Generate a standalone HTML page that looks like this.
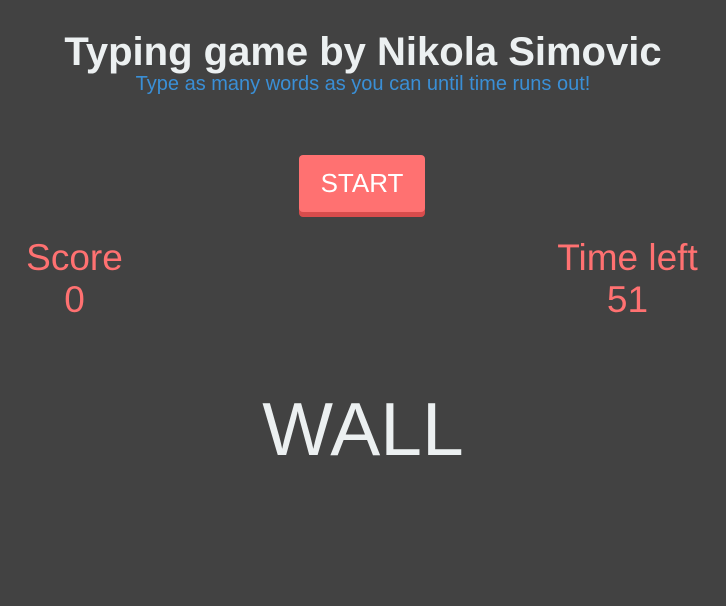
<!DOCTYPE html>
<html><head><style>
html,body{margin:0;padding:0;width:726px;height:606px;background:#424242;overflow:hidden;font-family:"Liberation Sans",Arial,sans-serif}
.a{position:absolute;line-height:1;white-space:nowrap}
.c{left:0;width:726px;text-align:center}
.btn{position:absolute;left:299px;top:155px;width:126px;height:57px;background:#ff7171;border-radius:4px;box-shadow:0 5px 0 #d84c4c}
.red{color:#ff7171;font-size:37px;text-align:center}
</style></head><body>
<div class="a c" style="top:32px;font-size:40px;font-weight:bold;color:#ecf0f1">Typing game by Nikola Simovic</div>
<div class="a c" style="top:74px;font-size:20px;color:#3a8fd6">Type as many words as you can until time runs out!</div>
<div class="btn"></div>
<div class="a" style="left:299px;width:126px;text-align:center;top:170px;font-size:26px;color:#fff">START</div>
<div class="a red" style="left:0;width:149px;top:239px">Score</div>
<div class="a red" style="left:0;width:149px;top:281px">0</div>
<div class="a red" style="left:527px;width:201px;top:239px">Time left</div>
<div class="a red" style="left:527px;width:201px;top:281px">51</div>
<div class="a c" style="top:392px;font-size:75px;color:#ecf0f1">WALL</div>
</body></html>
